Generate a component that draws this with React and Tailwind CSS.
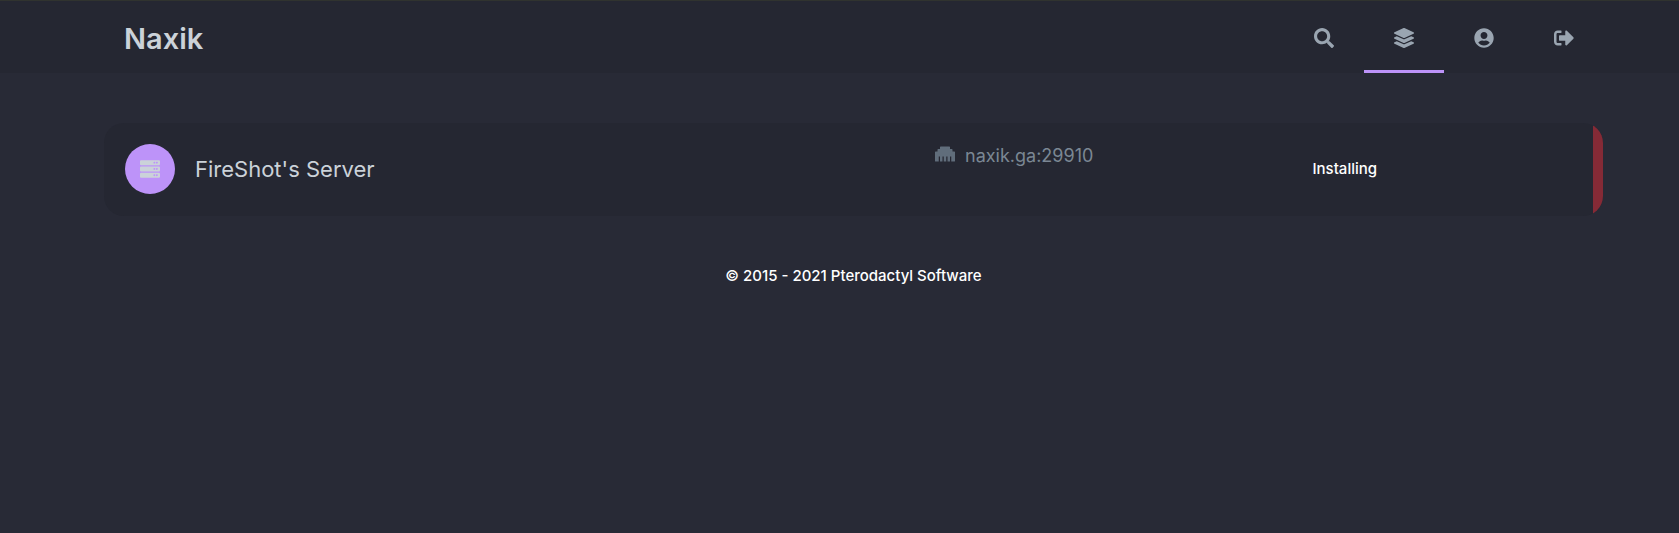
import { FaSearch, FaLayerGroup, FaUserCircle, FaSignOutAlt, FaServer, FaEthernet } from "react-icons/fa";

const navItems = [
  { label: "Search", Icon: FaSearch, button: true },
  { label: "Dashboard", Icon: FaLayerGroup, active: true },
  { label: "Account", Icon: FaUserCircle },
  { label: "Sign out", Icon: FaSignOutAlt, button: true },
];

function NavItem({ label, Icon, active, button }) {
  const classes =
    "flex w-20 items-center justify-center border-b-3 pt-1 text-xl text-[#9aa5b1] " +
    (active ? "border-[#bd93f9]" : "border-transparent");
  return button ? (
    <button type="button" aria-label={label} className={classes}>
      <Icon />
    </button>
  ) : (
    <a href="#" aria-label={label} className={classes}>
      <Icon />
    </a>
  );
}

function ServerRow() {
  return (
    <a
      href="#"
      className="flex items-stretch overflow-hidden rounded-[20px] bg-[#252732] text-[#cbd2d9]"
    >
      <div className="grid grow grid-cols-12 gap-4 pt-[21px] pb-[22px] pl-[21px] pr-[10px]">
        <div className="col-span-6 flex items-center gap-5">
          <span className="flex size-[50px] items-center justify-center rounded-full bg-[#bd93f9] text-xl">
            <FaServer />
          </span>
          <p className="text-[22px] leading-8">FireShot's Server</p>
        </div>
        <div className="col-span-3 flex items-start gap-[10px] pl-[73px] text-[#606d7b]">
          <FaEthernet className="text-xl" />
          <p className="text-lg leading-6 text-[#7b8794]">naxik.ga:29910</p>
        </div>
        <div className="col-span-3 flex items-center pl-[82px] text-[15px] font-medium text-white">
          Installing
        </div>
      </div>
      <span className="w-[10px] shrink-0 bg-[#852a36]" />
    </a>
  );
}

export default function App() {
  return (
    <div className="min-h-screen bg-[#282a36] font-[Inter,sans-serif]">
      <header className="border-t border-[#30332f] bg-[#252732] pl-[104px] pr-[75px]">
        <div className="flex h-[72px] justify-between">
          <a href="#" className="flex items-center px-5 pt-[3px] text-[29px] font-semibold text-[#cbd2d9]">
            Naxik
          </a>
          <nav className="flex">
            {navItems.map((item) => (
              <NavItem key={item.label} {...item} />
            ))}
          </nav>
        </div>
      </header>
      <main className="pl-[104px] pr-[76px] pt-[50px]">
        <ServerRow />
        <footer className="pt-12 text-center text-[15px] leading-6 font-medium text-white">
          © 2015 - 2021 Pterodactyl Software
        </footer>
      </main>
    </div>
  );
}
